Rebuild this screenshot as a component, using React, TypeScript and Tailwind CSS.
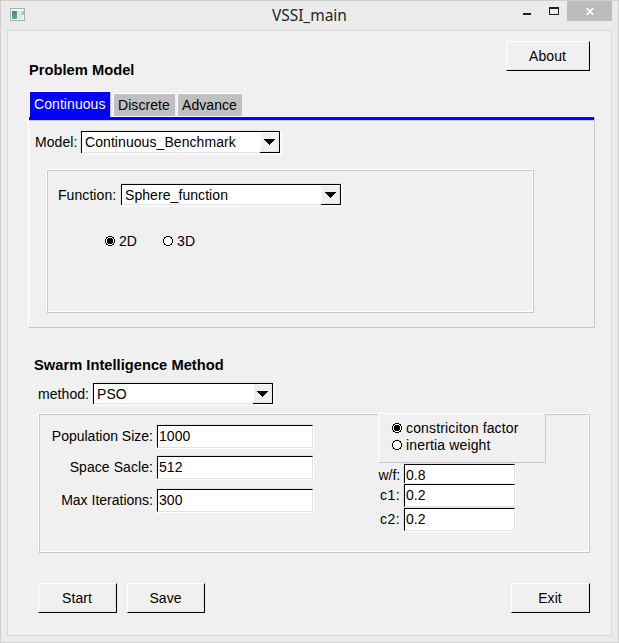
import type { ReactNode } from "react";

function Button({ label, className }: { label: string; className: string }) {
  return (
    <button
      className={`h-[30px] border border-t-white border-l-white border-r-black border-b-black bg-[#f0f0f0] ${className}`}
    >
      <span className="flex h-full w-full items-center justify-center border-r border-b border-[#e2e2e2] leading-4">
        {label}
      </span>
    </button>
  );
}

function Combo({ value, className }: { value: string; className: string }) {
  return (
    <div
      className={`shrink-0 border-t border-r-2 border-b-2 border-l border-t-[#e3e3e3] border-l-[#e3e3e3] border-r-[#f9f9f9] border-b-[#f9f9f9] ${className}`}
    >
      <div className="flex h-full border-t border-r border-l border-black bg-white">
        <div className="flex-1 border-b border-[#e3e3e3] pl-[3px] leading-[20px] whitespace-nowrap">{value}</div>
        <div className="w-[19px] border-b border-black">
          <div className="h-full border border-t-white border-r-[#e3e3e3] border-b-[#e3e3e3] border-l-white bg-[#f0f0f0] pt-[6px] pl-[3px]">
            <svg className="block" width="11" height="6" viewBox="0 0 11 6" shapeRendering="crispEdges">
              <path d="M0 0h11v1h-1v1h-1v1h-1v1h-1v1h-1v1h-1v-1h-1v-1h-1v-1h-1v-1h-1v-1h-1z" />
            </svg>
          </div>
        </div>
      </div>
    </div>
  );
}

function Field({ value, className }: { value: string; className: string }) {
  return (
    <div className={`shrink-0 border border-t-[#e3e3e3] border-l-[#e3e3e3] border-r-white border-b-white ${className}`}>
      <div className="h-full border border-t-black border-l-black border-r-[#e3e3e3] border-b-[#e3e3e3] bg-white pl-px leading-[21px]">
        {value}
      </div>
    </div>
  );
}

function Radio({ label, checked }: { label: string; checked?: boolean }) {
  return (
    <label className="flex items-center gap-[3px] leading-4 whitespace-nowrap">
      <svg width="12" height="12" viewBox="0 0 12 12" overflow="visible">
        <path d="M2 10A5.8 5.8 0 0 1 10 2" fill="none" stroke="#cfcfcf" />
        <path d="M2 10A5.8 5.8 0 0 0 10 2" fill="none" stroke="#fff" />
        <g shapeRendering="crispEdges">
          <path d="M4 1h4v1h2v2h1v4h-1v2h-2v1h-4v-1h-2v-2h-1v-4h1v-2h2z" fill="#fff" />
          <path d="M4 1h4v1H4zM2 2h2v1H2zM8 2h2v1H8zM2 3h1v1H2zM9 3h1v1H9zM1 4h1v4H1zM10 4h1v4h-1zM2 8h1v1H2zM9 8h1v1H9zM2 9h2v1H2zM8 9h2v1H8zM4 10h4v1H4z" />
          {checked && <path d="M4 3h4v1h1v4h-1v1h-4v-1h-1v-4h1z" />}
        </g>
      </svg>
      {label}
    </label>
  );
}

function Etched({ children, className }: { children: ReactNode; className: string }) {
  return (
    <div className={`border border-t-white border-l-white border-r-[#c8c8c8] border-b-[#c8c8c8] ${className}`}>
      <div className="h-full border border-t-[#c8c8c8] border-l-[#c8c8c8] border-r-white border-b-white">{children}</div>
    </div>
  );
}

export default function App() {
  return (
    <div className="flex h-[643px] w-[619px] flex-col overflow-hidden border border-[#d0d0d0] bg-[#ebebeb] px-[6px] pb-[6px] font-['Liberation_Sans',Arial,sans-serif] text-[14px] tracking-[0.07px] text-black">
      <div className="flex h-[29px] shrink-0 items-start">
        <svg className="mt-[7px] ml-[3px]" width="16" height="14" viewBox="0 0 16 14">
          <defs>
            <linearGradient id="pane" x1="0" y1="0" x2="0" y2="1">
              <stop offset="0" stopColor="#4d7f9d" />
              <stop offset="1" stopColor="#5cae86" />
            </linearGradient>
          </defs>
          <rect x="0.5" y="0.5" width="14" height="12" fill="#f4f6f6" stroke="#aab0b2" />
          <rect x="2" y="3" width="5" height="8" fill="url(#pane)" />
          <rect x="8" y="3" width="4" height="8" fill="#dfe3e4" />
          <rect x="12" y="3" width="2" height="4" fill="#a5c5c0" />
        </svg>
        <div className="mt-[3px] ml-[246px] w-[90px] font-['Noto_Sans',sans-serif] text-[15.5px] leading-[22px] tracking-[-0.05px] whitespace-nowrap text-[#262626]">
          VSSI_main
        </div>
        <div className="mt-[12px] ml-[161px] h-[2px] w-[8px] bg-[#222]" />
        <div className="mt-[6px] ml-[18px] h-[8px] w-[10px] border border-t-2 border-[#222]" />
        <div className="ml-[8px] flex h-[20px] w-[45px] justify-center bg-[#bcbcbc] pt-[7px]">
          <svg width="8" height="7" viewBox="0 0 8 7">
            <path d="M0.7 0L7.3 7M7.3 0L0.7 7" stroke="#fff" strokeWidth="1.7" />
          </svg>
        </div>
      </div>

      <div className="flex-1 border border-[#d9d9d9] bg-[#f0f0f0]">
        <div className="flex h-[47px] justify-between pr-[21px] pl-[21px]">
          <h2 className="self-end text-[14.67px] leading-4 font-bold tracking-[0.03px]">Problem Model</h2>
          <Button label="About" className="mt-[10px] w-[84px]" />
        </div>

        <div className="mt-[13px] ml-[21px] flex h-[25px] leading-4">
          <div className="relative z-10 h-[26px] w-[82px] border-t border-r border-l border-t-white border-r-[#c8c8c8] border-l-white bg-[#0000ff] pt-[4px] pl-[4px] text-white">
            Continuous
          </div>
          <div className="mt-[2px] ml-[2px] w-[62px] border-t border-l border-white bg-[#c0c0c0] pt-[3px] pl-[4px]">
            Discrete
          </div>
          <div className="mt-[2px] ml-[2px] w-[65px] border-t border-l border-white bg-[#c0c0c0] pt-[3px] pl-[4px]">
            Advance
          </div>
        </div>

        <div className="ml-[20px] h-[212px] w-[567px] border border-t-white border-r-[#c8c8c8] border-b-[#c8c8c8] border-l-white">
          <div className="h-[4px] border-b border-[#c8c8c8] bg-[#0000ff]" />
          <div className="mt-[9px] flex h-[24px]">
            <span className="w-[51px] pl-[6px] leading-[24px]">Model:</span>
            <Combo value="Continuous_Benchmark" className="h-[25px] w-[202px]" />
          </div>
          <Etched className="mt-[15px] ml-[17px] h-[144px] w-[488px]">
            <div className="mt-[12px] flex h-[24px]">
              <span className="w-[72px] pl-[10px] leading-[24px]">Function:</span>
              <Combo value="Sphere_function" className="h-[24px] w-[223px]" />
            </div>
            <div className="mt-[26px] flex gap-[25px] pl-[56px]">
              <Radio label="2D" checked />
              <Radio label="3D" />
            </div>
          </Etched>
        </div>

        <h2 className="mt-[29px] ml-[26px] text-[14.67px] leading-4 font-bold tracking-[0.03px]">
          Swarm Intelligence Method
        </h2>
        <div className="mt-[9px] flex h-[23px]">
          <span className="w-[84px] pl-[30px] leading-[24px]">method:</span>
          <Combo value="PSO" className="h-[24px] w-[183px]" />
        </div>

        <Etched className="mt-[8px] ml-[30px] h-[140px] w-[552px]">
          <div className="flex">
            <div className="w-[338px] pt-[9px]">
              <div className="flex h-[25px]">
                <span className="w-[113px] text-right leading-[25px] tracking-normal">Population Size:</span>
                <Field value="1000" className="ml-[3px] h-[25px] w-[158px]" />
              </div>
              <div className="mt-[6px] flex h-[25px]">
                <span className="w-[113px] text-right leading-[25px]">Space Sacle:</span>
                <Field value="512" className="ml-[3px] h-[25px] w-[158px]" />
              </div>
              <div className="mt-[8px] flex h-[25px]">
                <span className="w-[113px] text-right leading-[25px] tracking-normal">Max Iterations:</span>
                <Field value="300" className="ml-[3px] h-[25px] w-[158px]" />
              </div>
            </div>
            <div className="-mt-[2px]">
              <div className="flex h-[50px] w-[168px] flex-col gap-px border border-t-white border-r-[#c8c8c8] border-b-[#c8c8c8] border-l-white bg-[#f0f0f0] pt-[6px] pl-[12px] tracking-[0.15px]">
                <Radio label="constriciton factor" checked />
                <Radio label="inertia weight" />
              </div>
              <div className="flex h-[20px] overflow-hidden">
                <span className="w-[22px] text-right leading-[25px] tracking-[-0.1px]">w/f:</span>
                <Field value="0.8" className="ml-[3px] h-[25px] w-[113px]" />
              </div>
              <div className="flex h-[24px] overflow-hidden">
                <span className="w-[22px] text-right leading-[25px] tracking-[0.4px]">c1:</span>
                <Field value="0.2" className="ml-[3px] h-[25px] w-[113px]" />
              </div>
              <div className="flex h-[25px]">
                <span className="w-[22px] text-right leading-[25px] tracking-[0.4px]">c2:</span>
                <Field value="0.2" className="ml-[3px] h-[25px] w-[113px]" />
              </div>
            </div>
          </div>
        </Etched>

        <div className="mt-[30px] flex pl-[30px]">
          <Button label="Start" className="w-[79px]" />
          <Button label="Save" className="ml-[10px] w-[78px]" />
          <Button label="Exit" className="ml-[306px] w-[79px]" />
        </div>
      </div>
    </div>
  );
}
